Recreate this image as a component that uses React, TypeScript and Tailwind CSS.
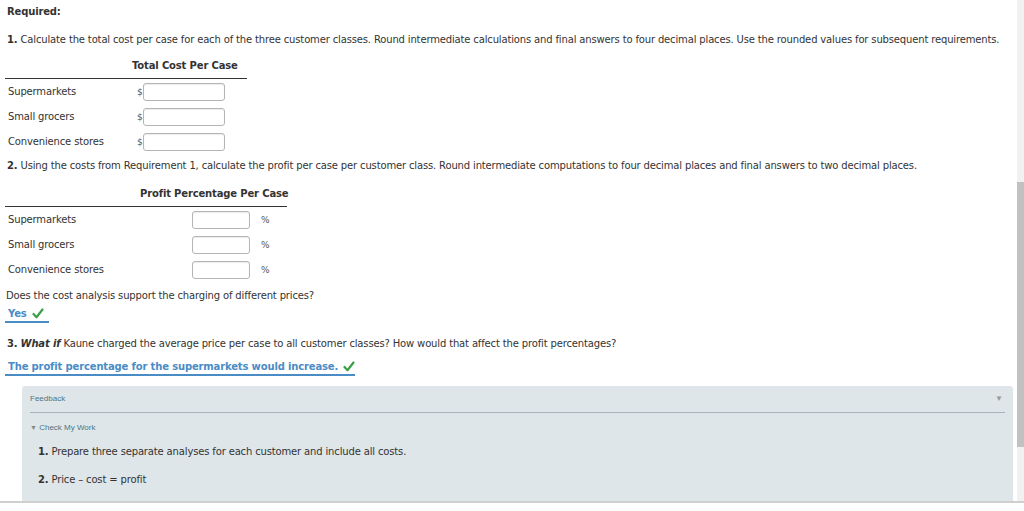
import React from "react";

const blue = "text-[#4a8cc6]";

const Check = () => (
  <svg width="12" height="11" viewBox="0 0 12 11" className="inline-block ml-[5px] -mt-[2px]">
    <path d="M1.5 6 L4.5 9.2 L10.5 1.5" fill="none" stroke="#3c9f45" strokeWidth="2.2" strokeLinecap="round" strokeLinejoin="round" />
  </svg>
);

const CostRow = ({ label }: { label: string }) => (
  <div className="flex items-center h-[25px]">
    <div className="w-[132px] pl-[3px]">{label}</div>
    <span className="w-[6px] text-[9px] text-[#555]">$</span>
    <div className="w-[82px] h-[18px] rounded-[3px] border border-[#b5b5b5] shadow-[inset_0_1px_1px_rgba(0,0,0,0.08)] bg-white" />
  </div>
);

const PercentRow = ({ label }: { label: string }) => (
  <div className="flex items-center h-[25px]">
    <div className="w-[187px] pl-[3px]">{label}</div>
    <div className="w-[58px] h-[18px] rounded-[3px] border border-[#b5b5b5] shadow-[inset_0_1px_1px_rgba(0,0,0,0.08)] bg-white" />
    <span className="ml-[11px] text-[9px] text-[#555]">%</span>
  </div>
);

export default function App() {
  return (
    <div className="w-[1024px] h-[511px] overflow-hidden bg-white text-[10px] leading-[14px] tracking-[-0.15px] text-[#333] font-['DejaVu_Sans',Verdana,sans-serif]">
      <div className="flex h-[501px]">
        {/* page content */}
        <div className="flex-1 pt-[5px] whitespace-nowrap">
          <div className="pl-[7px] font-bold">Required:</div>

          <div className="pl-[7px] mt-[14px]">
            <b>1.</b> Calculate the total cost per case for each of the three customer classes. Round intermediate calculations and final answers to four decimal places. Use the rounded values for subsequent requirements.
          </div>

          {/* table 1 */}
          <div className="ml-[5px] w-[242px] mt-[12px]">
            <div className="pl-[127px] font-bold pb-[5px] border-b border-[#333]">Total Cost Per Case</div>
            <CostRow label="Supermarkets" />
            <CostRow label="Small grocers" />
            <CostRow label="Convenience stores" />
          </div>

          <div className="pl-[7px] mt-[5px]">
            <b>2.</b> Using the costs from Requirement 1, calculate the profit per case per customer class. Round intermediate computations to four decimal places and final answers to two decimal places.
          </div>

          {/* table 2 */}
          <div className="ml-[5px] w-[282px] mt-[14px]">
            <div className="pl-[135px] font-bold pb-[5px] border-b border-[#333]">Profit Percentage Per Case</div>
            <PercentRow label="Supermarkets" />
            <PercentRow label="Small grocers" />
            <PercentRow label="Convenience stores" />
          </div>

          <div className="pl-[6px] mt-[7px]">Does the cost analysis support the charging of different prices?</div>
          <div className="ml-[5px] mt-[4px] inline-block w-[44px] pl-[3px] border-b-2 border-[#4a8cc6]">
            <span className={`font-bold ${blue}`}>Yes</span>
            <Check />
          </div>

          <div className="pl-[7px] mt-[14px]">
            <b>3.</b> <b className="italic">What if</b> Kaune charged the average price per case to all customer classes? How would that affect the profit percentages?
          </div>
          <div className="ml-[5px] mt-[9px] w-[350px] pl-[3px] border-b-2 border-[#4a8cc6]">
            <span className={`font-bold ${blue}`}>The profit percentage for the supermarkets would increase.</span>
            <Check />
          </div>

          {/* feedback */}
          <div className="ml-[22px] mr-[4px] mt-[10px] h-[115px] rounded-t-[3px] bg-[#dfe6e9] px-[8px] pt-[6px]">
            <div className="flex justify-between items-center pb-[6px] border-b border-[#a9b4b8] font-['Liberation_Sans',Arial,sans-serif] tracking-normal text-[8px] text-[#4c7583]">
              <span>Feedback</span>
              <span className="text-[8px] text-[#999] pr-[2px]">▼</span>
            </div>
            <div className="mt-[8px] font-['Liberation_Sans',Arial,sans-serif] tracking-normal text-[8px] text-[#4c7583]">
              <span className="text-[#888] text-[7px]">▼</span> Check My Work
            </div>
            <div className="pl-[8px] mt-[10px]">
              <b>1.</b> Prepare three separate analyses for each customer and include all costs.
            </div>
            <div className="pl-[8px] mt-[14px]">
              <b>2.</b> Price – cost = profit
            </div>
          </div>
        </div>

        {/* scrollbar */}
        <div className="w-[7px] bg-[#f1f1f1] pt-[182px]">
          <div className="h-[265px] bg-[#c1c1c1]" />
        </div>
      </div>
      <div className="h-[2px] bg-[#cfcfcf]" />
    </div>
  );
}
